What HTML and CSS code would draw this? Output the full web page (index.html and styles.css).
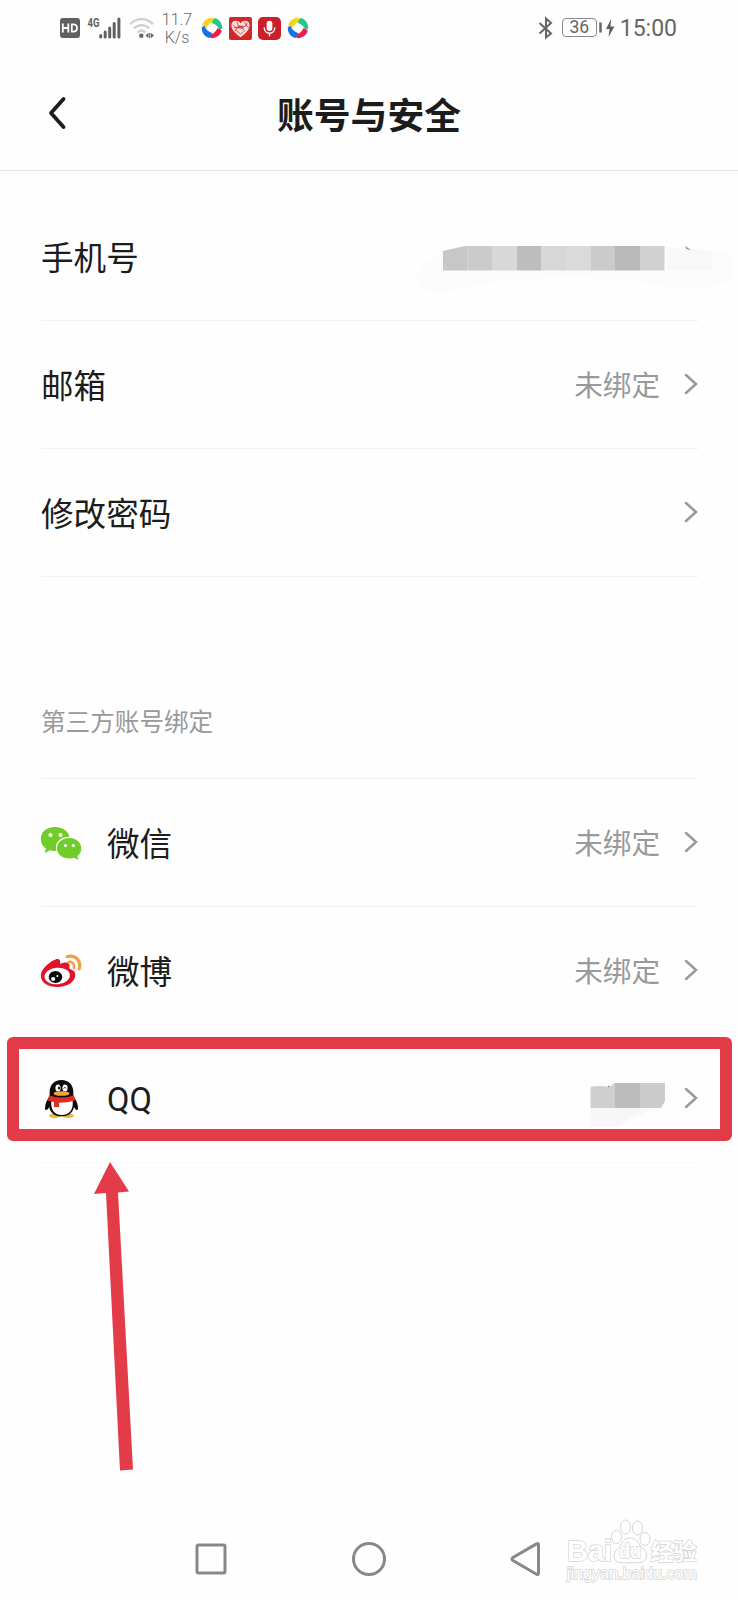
FILE: index.html
```html
<!DOCTYPE html>
<html lang="zh-CN">
<head>
<meta charset="utf-8">
<title>账号与安全</title>
<link rel="stylesheet" href="styles.css">
</head>
<body>
<svg class="defs" width="0" height="0" aria-hidden="true">
  <symbol id="chevron" viewBox="0 0 14 22"><path d="M2 2 12 11 2 20" fill="none" stroke="#999" stroke-width="2.5" stroke-linecap="round"/></symbol>
  <symbol id="swirl" viewBox="0 0 22 22">
    <path d="M1.200 8.200C2.500 3.500 7.200.3 12.600.9L13 3.500C10 5 6.500 8 5.500 11Z" fill="#f7d21e"/>
    <path d="M13.500 1C18.500 2 21.500 6.500 21.200 11.600L18.500 13C17 9.500 14.500 7 10.500 5.800Z" fill="#27c58a"/>
    <path d="M20.800 13.500C19.800 18 15 21.700 9.600 21.100L9 18.500C12 17 15.500 14 16.500 11Z" fill="#ec1c4b"/>
    <path d="M8.500 20.900C3.500 20 .5 15.500.8 10L3.500 9C5 12.500 7.500 15 11.500 16.200Z" fill="#1672dc"/>
  </symbol>
</svg>
<div class="screen">
  <header class="status">
    <div class="status-left">
      <svg width="62" height="22" viewBox="0 0 62 22">
        <rect x="0" y="1" width="20" height="20" rx="3" fill="#606060"/>
        <path d="M2.800 6.500v9M8.300 6.500v9M2.800 11h5.500M11.800 7.300v7.400h1.500q3.700 0 3.700-3.700t-3.700-3.700z" fill="none" stroke="#fff" stroke-width="1.800"/>
        <text class="net" x="27.500" y="10" textLength="12" lengthAdjust="spacingAndGlyphs">4G</text>
        <path d="M40.700 20v-1.500M45.200 20v-5M49.700 20v-9M54.200 20v-13.500M58.900 20V2" stroke="#606060" stroke-width="3" stroke-linecap="round"/>
      </svg>
      <svg class="wifi" width="26" height="22" viewBox="0 0 26 22">
        <path d="M1.200 7.200C7.500.5 17.500.5 24 7.200M4.800 11.500c4.500-4.500 11-4.500 15.500 0M8.500 15.500c2.500-2.500 5.600-2.500 8 0" fill="none" stroke="#d0d0d0" stroke-width="2.300"/>
        <circle cx="12.300" cy="18.800" r="2.200" fill="#666"/>
        <path d="M16.500 18.500l3-2.700v5.400zM25 18.500l-3.300-2.700v5.400z" fill="#666"/><path d="M20.600 16v5" stroke="#666"/>
      </svg>
      <div class="speed"><span>11.7</span><span>K/s</span></div>
      <div class="apps">
        <svg width="22" height="22"><use href="#swirl"/></svg>
        <svg width="23" height="23" viewBox="0 0 24 24"><rect width="24" height="24" rx="2" fill="#d02828"/><path d="M12 21C6 16.500 2.500 13 2.500 8.500 2.500 3.500 9 2.500 12 6.500c3-4 9.500-3 9.500 2C21.500 13 18 16.500 12 21z" fill="#f8dede"/><path d="M4 8l4 4-2 3M8 5l2 4-3 4 5 5 4-4-2-3 4-2-2-4M19 6l-1 3 3 2M5 11h4" fill="none" stroke="#c93030" stroke-width=".8"/><path d="M9 9h6v3H9z" fill="#d34a4a"/></svg>
        <svg width="23" height="23" viewBox="0 0 24 24"><rect width="24" height="24" rx="5" fill="#c9202a"/><rect x="9" y="4" width="6" height="10.500" rx="3" fill="#fff"/><path d="M6.500 11c0 8 11 8 11 0M12 17v3" fill="none" stroke="#fff" stroke-width="1.500"/></svg>
        <svg width="22" height="22"><use href="#swirl"/></svg>
      </div>
    </div>
    <div class="status-right">
      <svg class="bluetooth" width="16" height="24" viewBox="0 0 16 24"><path d="M1.500 7 13 17.500 8 21.500V2.500l5 4.500L1.500 17.500" fill="none" stroke="#666" stroke-width="2"/></svg>
      <div class="battery">36</div>
      <svg class="tip" width="16" height="20" viewBox="0 0 16 20"><path d="M1.500 4.500v10" stroke="#666" stroke-width="2.500"/><path d="M12 1 7 11h3.500L9.500 19 15.500 8.500h-4z" fill="#606060"/></svg>
      <time>15:00</time>
    </div>
  </header>

  <div class="titlebar">
    <svg class="back" width="20" height="34" viewBox="0 0 20 34"><path d="M16.500 3 4 17 16.500 31" fill="none" stroke="#1c1c1c" stroke-width="3.800" stroke-linecap="round" stroke-linejoin="round"/></svg>
    <h1>账号与安全</h1>
  </div>

  <main>
    <section class="group">
      <div class="row">
        <span>手机号</span>
        <svg class="phone-mask" width="322" height="66" viewBox="416 236 322 66">
          <path d="M418 272Q425 258 443 252Q560 240 690 248L734 252V278Q720 290 667 287Q550 265 443 293Q412 295 418 272" fill="#fcfcfc"/>
          <path d="M667 247 712 251V270.500H667z" fill="#f8f8f8"/>
          <path d="M443 251 465 246H467.500V270.500H443z" fill="#c7c7c7"/>
          <path d="M467.500 246H492V270.500H467.500z" fill="#cbcbcb"/>
          <path d="M492 246H517V270.500H492z" fill="#d8d8d8"/>
          <path d="M517 246H541.500V270.500H517z" fill="#bdbdbd"/>
          <path d="M541.500 246H566V270.500H541.500z" fill="#d7d7d7"/>
          <path d="M566 246H591V270.500H566z" fill="#dadada"/>
          <path d="M591 246H615V270.500H591z" fill="#cbcbcb"/>
          <path d="M615 246H640V270.500H615z" fill="#b9b9b9"/>
          <path d="M640 246H664.500V270.500H640z" fill="#d1d1d1"/>
          <path d="M685 246 691 250 686.500 249z" fill="#888"/>
        </svg>
      </div>
      <div class="row"><span>邮箱</span><span class="value">未绑定</span><svg class="chevron"><use href="#chevron"/></svg></div>
      <div class="row"><span>修改密码</span><svg class="chevron"><use href="#chevron"/></svg></div>
    </section>

    <h2>第三方账号绑定</h2>

    <section class="group linked">
      <div class="row">
        <svg class="brand" viewBox="0 0 42 42">
          <path d="M15 5C6 5 .8 10.500.8 17c0 4.500 2.200 7.500 5.200 9.500L4.500 31l5.500-2.800c2 .6 4 .8 6.500.6C14 21 20 14.500 29.500 14.800 28 8.500 22 5 15 5z" fill="#70cc29"/>
          <path d="M29.500 16C22 16 17 20.500 17 26.500S22.500 36.500 29.500 36.500c2 0 3.500-.3 5-.8L38.500 38l-1.200-4c2.500-2 4-4.500 4-7.500C41.300 20.500 36 16 29.500 16z" fill="#70cc29"/>
          <g fill="#fff"><circle cx="10.500" cy="13" r="2"/><circle cx="20.500" cy="13" r="2"/><circle cx="25.500" cy="23.500" r="1.600"/><circle cx="33.300" cy="23.500" r="1.600"/></g>
        </svg>
        <span>微信</span><span class="value">未绑定</span><svg class="chevron"><use href="#chevron"/></svg>
      </div>
      <div class="row covered">
        <svg class="brand" viewBox="0 0 42 42">
          <path d="M15.500 9.500c3-1.500 5.500.5 4.500 4.500 4.500-2 10-2.500 9.500 2.500-.1 1.500-.5 2 .5 2.500 3 1 5.300 2.500 5.300 6C35.300 32 27 37 17.500 37 8 37 .8 32.500.8 25.500.8 20 8 12.500 15.500 9.500z" fill="#df142b"/>
          <ellipse cx="17.200" cy="26" rx="12.700" ry="8.300" transform="rotate(-6 17.200 26)" fill="#fff"/>
          <ellipse cx="15.500" cy="27" rx="6.800" ry="6" fill="#080808"/><circle cx="13.200" cy="29" r="2.100" fill="#fff"/><circle cx="17.400" cy="26" r="1" fill="#fff"/>
          <path d="M27.500 6.500C35.500 4.500 41.500 11 39.200 18.800" fill="none" stroke="#eca143" stroke-width="3.300" stroke-linecap="round"/>
          <path d="M28.500 12c4-.8 6.500 2.300 5.300 6" fill="none" stroke="#eca143" stroke-width="2.500" stroke-linecap="round"/>
        </svg>
        <span>微博</span><span class="value">未绑定</span><svg class="chevron"><use href="#chevron"/></svg>
      </div>
      <div class="row">
        <svg class="brand penguin" viewBox="0 0 42 42">
          <ellipse cx="14" cy="37.800" rx="6" ry="2.200" fill="#edb33c"/><ellipse cx="27" cy="37.800" rx="6" ry="2.200" fill="#edb33c"/>
          <path d="M20.300 2C13 2 8.500 7.500 8.700 14v4C6 22 3.500 27 4.200 31.500c1 1.500 2.700-.2 4-2.500C9 35 14 38.300 20.500 38.300S32 35 33 29c1.300 2.500 2.800 4 3.900 2.500C37.700 27 35 22 32.300 18v-4C32.500 7.500 28 2 20.300 2z" fill="#0b0b0b"/>
          <path d="M10.500 22H31.500C33 31 28.500 37 20.800 37S9 31 10.500 22z" fill="#fff"/>
          <ellipse cx="17" cy="10" rx="2.600" ry="3.600" fill="#fff"/><ellipse cx="24" cy="10" rx="2.600" ry="3.600" fill="#fff"/>
          <ellipse cx="18" cy="10" rx="1" ry="1.600"/><path d="M22.800 10.500q1.200-2.500 2.300 0" fill="none" stroke="#000" stroke-width=".9"/>
          <ellipse cx="20.500" cy="15.500" rx="8" ry="2.300" fill="#eda82f"/>
          <path d="M8 17.300q12.500 4.500 25 0l1.200 5q-8 2.700-16.200 2.500V29h-5v-4.700l-6-1.800z" fill="#de2e22"/>
        </svg>
        <span class="latin">QQ</span>
        <svg class="name-mask" width="94" height="66" viewBox="573 1066 94 66">
          <path d="M573 1116 582 1088 620 1078 645 1065 665 1083V1107L652 1117H640L618 1128H590z" fill="#fdfdfd"/>
          <path d="M590.500 1107H650Q640 1118 630 1118 620 1127 615 1127H590.500z" fill="#f7f7f7"/>
          <path d="M590.500 1087Q600 1085 609 1087L615 1083V1108H590.500z" fill="#cfcfcf"/>
          <path d="M615 1083H640V1108H615z" fill="#bcbcbc"/>
          <path d="M640 1083H665V1101L661 1108H640z" fill="#cbcbcb"/>
          <circle cx="608.500" cy="1086.500" r=".8" fill="#777"/>
        </svg>
        <svg class="chevron"><use href="#chevron"/></svg>
      </div>
    </section>
  </main>

  <nav>
    <svg width="32" height="36" viewBox="0 0 32 36"><rect x="2" y="4" width="28" height="28" rx="1.500"/></svg>
    <svg width="36" height="36" viewBox="0 0 36 36"><circle cx="18" cy="18" r="15.500"/></svg>
    <svg width="32" height="36" viewBox="0 0 32 36"><path d="M28.500 4Q28.500 1.700 26.500 2.900L3 16.500Q1 18 3 19.500L26.500 33.200Q28.500 34.300 28.500 32z"/></svg>
  </nav>

  <div class="highlight"></div>
  <svg class="arrow" width="50" height="320" viewBox="88 1156 50 320"><path d="M110 1162 129 1191.500 118 1192.500 133 1469.500 120 1470.500 106 1193 94 1194z" fill="#e33b47"/></svg>
  <svg class="watermark" width="150" height="74" viewBox="560 1516 150 74">
    <text class="wm-brand" x="567" y="1561" textLength="45" lengthAdjust="spacingAndGlyphs">Bai</text>
    <g fill="#fff" stroke="#d5d5d5" stroke-width="1">
      <ellipse cx="616.500" cy="1537" rx="5" ry="6.500"/><ellipse cx="625.500" cy="1527" rx="5" ry="7"/><ellipse cx="637.500" cy="1528" rx="5" ry="7"/><ellipse cx="645" cy="1539" rx="5" ry="6.500"/>
      <path d="M630 1538c-8 0-8 7-12 10-6 5-5 14 2 14.500 5 .4 15 .4 20 0 7-.5 9-9 3-14-5-4-5-10.500-13-10.500z"/>
    </g>
    <text class="wm-du" x="619" y="1558" textLength="22" lengthAdjust="spacingAndGlyphs">du</text>
    <text class="wm-cn" x="650.500" y="1560">经验</text>
    <text class="wm-url" x="567" y="1579" textLength="130" lengthAdjust="spacingAndGlyphs">jingyan.baidu.com</text>
  </svg>
</div>
</body>
</html>
```
FILE: styles.css
```css
* { box-sizing: border-box; }
body { margin: 0; background: #fefefe; color: #1c1c1c; font-family: Roboto, "Noto Sans CJK SC", sans-serif; }
svg { display: block; flex: none; }
.defs { position: absolute; }
.screen { position: relative; width: 738px; height: 1600px; display: flex; flex-direction: column; overflow: hidden; }

.status { height: 56px; display: flex; justify-content: space-between; align-items: center; padding: 0 61px 0 60px; color: #666; }
.status-left, .status-right, .apps { display: flex; align-items: center; }
.net { font: bold 12px Roboto, sans-serif; fill: #606060; }
.wifi { margin-left: 7px; }
.speed { width: 32px; margin-left: 6px; padding-top: 1px; display: flex; flex-direction: column; align-items: center; font-size: 16px; line-height: 18px; font-weight: 300; }
.apps { gap: 6px; margin-left: 8px; }
.bluetooth { margin: 0 1px 1px -1px; }
.battery { width: 35px; height: 19px; margin: 0 0 1px 7px; border: 1.500px solid #888; border-radius: 4px; font-size: 17.500px; line-height: 17px; text-align: center; }
.tip { margin: 0 0 1px 2px; }
.status time { margin-left: 5px; padding-top: 2px; font-size: 23px; line-height: 28px; }

.titlebar { height: 115px; border-bottom: 1px solid #e5e5e5; display: grid; grid-template-columns: 78px 1fr 78px; align-items: center; }
.back { margin: 0 0 0 47px; }
h1 { margin: 7px 0 0; font-size: 36.800px; line-height: 50px; font-weight: 700; text-align: center; }

main { padding: 22px 40px 0 41px; }
.row { height: 128px; display: flex; align-items: center; border-bottom: 1px solid #f1f1f1; font-size: 32.600px; line-height: 48px; }
.row > span { padding-top: 5px; }
.row > .latin { padding-top: 3px; }
.row > .value { margin-left: auto; padding-top: 3px; color: #999; font-size: 28.600px; line-height: 44px; }
.chevron { width: 14px; height: 22px; margin: 0 0 1px 24px; }
span:not(.value) + .chevron { margin-left: auto; }
.phone-mask { margin: 24px -40px 0 auto; }
.name-mask { margin: 0 -7px 0 auto; }
h2 { margin: 0; height: 202px; padding-top: 128px; font-size: 24.600px; line-height: 36px; font-weight: 400; color: #999; }
.linked { margin-top: -1px; border-top: 1px solid #f0f0f0; }
.linked .row:last-child { border-color: #f8f8f8; }
.row.covered { border-color: transparent; }
.brand { width: 42px; height: 42px; margin: 0 25px 0 -1px; }
.brand.penguin { margin: 0 24px 0 0; }

nav { position: relative; margin-top: auto; height: 82px; display: flex; justify-content: space-between; padding: 23px 196px 0 195px; fill: none; stroke: #888; stroke-width: 3; }
.highlight { position: absolute; left: 6.500px; top: 1037px; width: 725px; height: 104px; border: 12.500px solid #e33b47; border-radius: 6px; }
.arrow { position: absolute; left: 88px; top: 1156px; }
.watermark { position: absolute; left: 560px; top: 1516px; }
.watermark text { fill: #fff; stroke: #d5d5d5; stroke-width: 1.500px; paint-order: stroke; font-family: "Liberation Sans", "Noto Sans CJK SC", sans-serif; }
.watermark .wm-brand { font-size: 29px; font-weight: 700; }
.watermark .wm-du { font-size: 20px; font-weight: 700; }
.watermark .wm-cn { font-size: 23px; font-weight: 700; }
.watermark .wm-url { font-size: 17px; }
```
